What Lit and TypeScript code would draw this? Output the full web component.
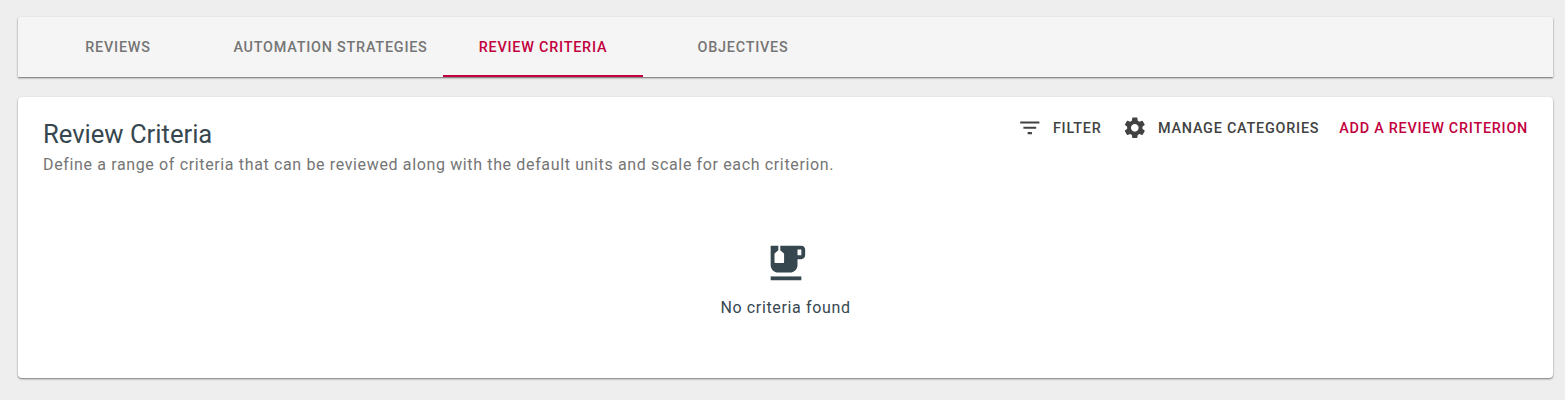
import { LitElement, html, css } from "lit";
import { customElement } from "lit/decorators.js";

@customElement("app-root")
export class AppRoot extends LitElement {
  static styles = css`
    :host {
      display: block;
      min-height: 400px;
      background: #eeeeee;
      box-sizing: border-box;
      padding: 17px 12px 0 18px;
      font-family: Roboto, sans-serif;
    }
    .tabs {
      display: flex;
      height: 60px;
      background: #f5f5f5;
      border-radius: 2px 2px 0 0;
      box-shadow: 0 1px 2px rgba(0, 0, 0, 0.55);
    }
    .tab {
      width: 200px;
      display: flex;
      align-items: center;
      justify-content: center;
      box-sizing: border-box;
      font-size: 14.4px;
      font-weight: 500;
      letter-spacing: 0.77px;
      color: #757575;
    }
    .tab.wide {
      width: 225px;
    }
    .tab.active {
      color: #c2003d;
      border-bottom: 2px solid #c2003d;
      padding-top: 2px;
    }
    .card {
      margin-top: 20px;
      height: 281px;
      background: #fff;
      border-radius: 4px;
      box-shadow: 0 1px 2px rgba(0, 0, 0, 0.5);
      display: flex;
      flex-direction: column;
    }
    .head {
      display: flex;
      justify-content: space-between;
      padding: 19px 25px 0 25px;
    }
    h1 {
      margin: 0;
      font-size: 25.6px;
      font-weight: 400;
      line-height: 37px;
      color: #37474f;
    }
    p {
      margin: 0;
      font-size: 16px;
      line-height: 24px;
      letter-spacing: 0.64px;
      color: #757575;
    }
    .actions {
      display: flex;
      align-items: center;
      height: 24px;
      font-size: 14.4px;
      font-weight: 500;
      letter-spacing: 0.77px;
      color: #424242;
      white-space: nowrap;
    }
    .btn {
      display: flex;
      align-items: center;
    }
    .btn svg {
      width: 25.6px;
      height: 25.6px;
      fill: #424242;
      margin-right: 10.4px;
    }
    .btn.filter {
      margin-right: 20.5px;
    }
    .btn.manage {
      margin-right: 20px;
    }
    .btn.add {
      color: #c2003d;
      letter-spacing: 0.74px;
    }
    .empty {
      display: flex;
      flex-direction: column;
      align-items: center;
      margin-top: 63px;
    }
    .empty svg {
      width: 46px;
      height: 46px;
      fill: #37474f;
    }
    .empty span {
      margin-top: 10px;
      font-size: 16px;
      letter-spacing: 0.64px;
      line-height: 24px;
      color: #37474f;
    }
  `;

  render() {
    return html`
      <nav class="tabs">
        <div class="tab">REVIEWS</div>
        <div class="tab wide">AUTOMATION STRATEGIES</div>
        <div class="tab active">REVIEW CRITERIA</div>
        <div class="tab">OBJECTIVES</div>
      </nav>
      <section class="card">
        <div class="head">
          <div>
            <h1>Review Criteria</h1>
            <p>Define a range of criteria that can be reviewed along with the default units and scale for each criterion.</p>
          </div>
          <div class="actions">
            <div class="btn filter">
              <svg viewBox="0 0 24 24"><path d="M10 18h4v-2h-4v2zM3 6v2h18V6H3zm3 7h12v-2H6v2z"></path></svg>
              FILTER
            </div>
            <div class="btn manage">
              <svg viewBox="0 0 24 24"><path d="M19.14 12.94c.04-.3.06-.61.06-.94 0-.32-.02-.64-.07-.94l2.03-1.58c.18-.14.23-.41.12-.61l-1.92-3.32c-.12-.22-.37-.29-.59-.22l-2.39.96c-.5-.38-1.03-.7-1.62-.94l-.36-2.54c-.04-.24-.24-.41-.48-.41h-3.84c-.24 0-.43.17-.47.41l-.36 2.54c-.59.24-1.13.57-1.62.94l-2.39-.96c-.22-.08-.47 0-.59.22L2.74 8.87c-.12.21-.08.47.12.61l2.03 1.58c-.05.3-.09.63-.09.94s.02.64.07.94l-2.03 1.58c-.18.14-.23.41-.12.61l1.92 3.32c.12.22.37.29.59.22l2.39-.96c.5.38 1.03.7 1.62.94l.36 2.54c.05.24.24.41.48.41h3.84c.24 0 .44-.17.47-.41l.36-2.54c.59-.24 1.13-.56 1.62-.94l2.39.96c.22.08.47 0 .59-.22l1.92-3.32c.12-.22.07-.47-.12-.61l-2.01-1.58zM12 15.6c-1.98 0-3.6-1.62-3.6-3.6s1.62-3.6 3.6-3.6 3.6 1.62 3.6 3.6-1.62 3.6-3.6 3.6z"></path></svg>
              MANAGE CATEGORIES
            </div>
            <div class="btn add">ADD A REVIEW CRITERION</div>
          </div>
        </div>
        <div class="empty">
          <svg viewBox="0 0 24 24"><path d="M4 19h16v2H4z"></path><path d="M20 3H9v2.4l1.81 1.45c.12.09.19.24.19.39v4.26c0 .28-.22.5-.5.5h-4c-.28 0-.5-.22-.5-.5V7.24c0-.15.07-.3.19-.39L8 5.4V3H4v10c0 2.21 1.79 4 4 4h6c2.21 0 4-1.79 4-4v-3h2c1.11 0 2-.89 2-2V5c0-1.11-.89-2-2-2zm0 5h-2V5h2v3z"></path></svg>
          <span>No criteria found</span>
        </div>
      </section>
    `;
  }
}
